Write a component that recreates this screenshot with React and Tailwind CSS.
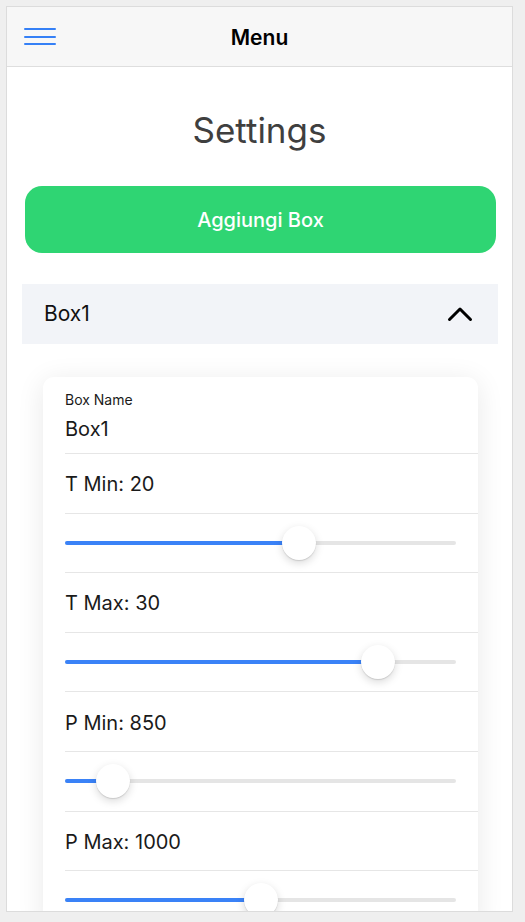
import React from "react";

const font = { fontFamily: "Inter, 'Noto Sans', 'Liberation Sans', sans-serif" };

function Slider({ pos }) {
  return (
    <div className="relative h-[59.6px] border-b border-[#e6e6e6] mr-0">
      <div className="absolute left-0 right-[22px] top-1/2 -translate-y-1/2 h-[4px] rounded-full bg-[#e5e5e5]">
        <div className="h-full rounded-full bg-[#3a82f7]" style={{ width: pos }} />
        <div
          className="absolute top-1/2 w-[34px] h-[34px] -mt-[17px] -ml-[17px] rounded-full bg-white shadow-[0_3px_8px_rgba(0,0,0,0.15),0_1px_1px_rgba(0,0,0,0.12)]"
          style={{ left: pos }}
        />
      </div>
    </div>
  );
}

function Label({ text }) {
  return (
    <div className="h-[59.6px] border-b border-[#e6e6e6] flex items-center pt-[2px] text-[20px] text-[#1a1a1a]">
      {text}
    </div>
  );
}

export default function App() {
  const rows = [
    ["T Min: 20", 234],
    ["T Max: 30", 313],
    ["P Min: 850", 48],
    ["P Max: 1000", 196],
  ];
  return (
    <div className="w-[525px] h-[922px] bg-[#efefef] pt-[6px] pl-[6px]" style={font}>
      <div className="w-[507px] h-[906px] border border-[#dcdcdc] bg-white overflow-hidden">
        <header className="h-[60px] bg-[#f7f7f7] border-b border-[#dedede] relative flex items-center justify-center pt-[2px]">
          <div className="absolute left-[17px] top-[21px] flex flex-col gap-[5.7px]">
            <span className="block w-[32px] h-[2px] rounded-full bg-[#3580f6]" />
            <span className="block w-[32px] h-[2px] rounded-full bg-[#3580f6]" />
            <span className="block w-[32px] h-[2px] rounded-full bg-[#3580f6]" />
          </div>
          <span className="text-[21px] font-semibold text-black">Menu</span>
        </header>
        <div className="px-[15px]">
          <h1 className="text-center text-[35px] leading-[40px] text-[#3f3f3f] mt-[43px]">Settings</h1>
          <button className="mt-[36px] ml-[3px] w-[471px] h-[67px] rounded-[17px] bg-[#2fd573] text-white text-[20px] font-medium flex items-center justify-center">
            Aggiungi Box
          </button>
          <div className="mt-[31px] h-[60px] w-[476px] bg-[#f2f4f8] flex items-center justify-between pl-[22px] pr-[25px]">
            <span className="text-[21px] text-[#111]">Box1</span>
            <svg width="26" height="16" viewBox="0 0 26 16" fill="none">
              <path d="M2.5 13.5 L13 3 L23.5 13.5" stroke="#000" strokeWidth="3" strokeLinecap="round" strokeLinejoin="round" />
            </svg>
          </div>
          <div className="mt-[33px] ml-[21px] w-[435px] bg-white rounded-[11px] shadow-[0_4px_28px_rgba(0,0,0,0.09)] pl-[22px] pt-[14px]">
            <div className="text-[14px] leading-[18px] text-[#1a1a1a]">Box Name</div>
            <div className="mt-[7px] text-[20px] leading-[26px] text-[#1a1a1a]">Box1</div>
            <div className="h-[12px] border-b border-[#e6e6e6]" />
            {rows.map(([t, p]) => (
              <React.Fragment key={t}>
                <Label text={t} />
                <Slider pos={p} />
              </React.Fragment>
            ))}
          </div>
        </div>
      </div>
    </div>
  );
}
